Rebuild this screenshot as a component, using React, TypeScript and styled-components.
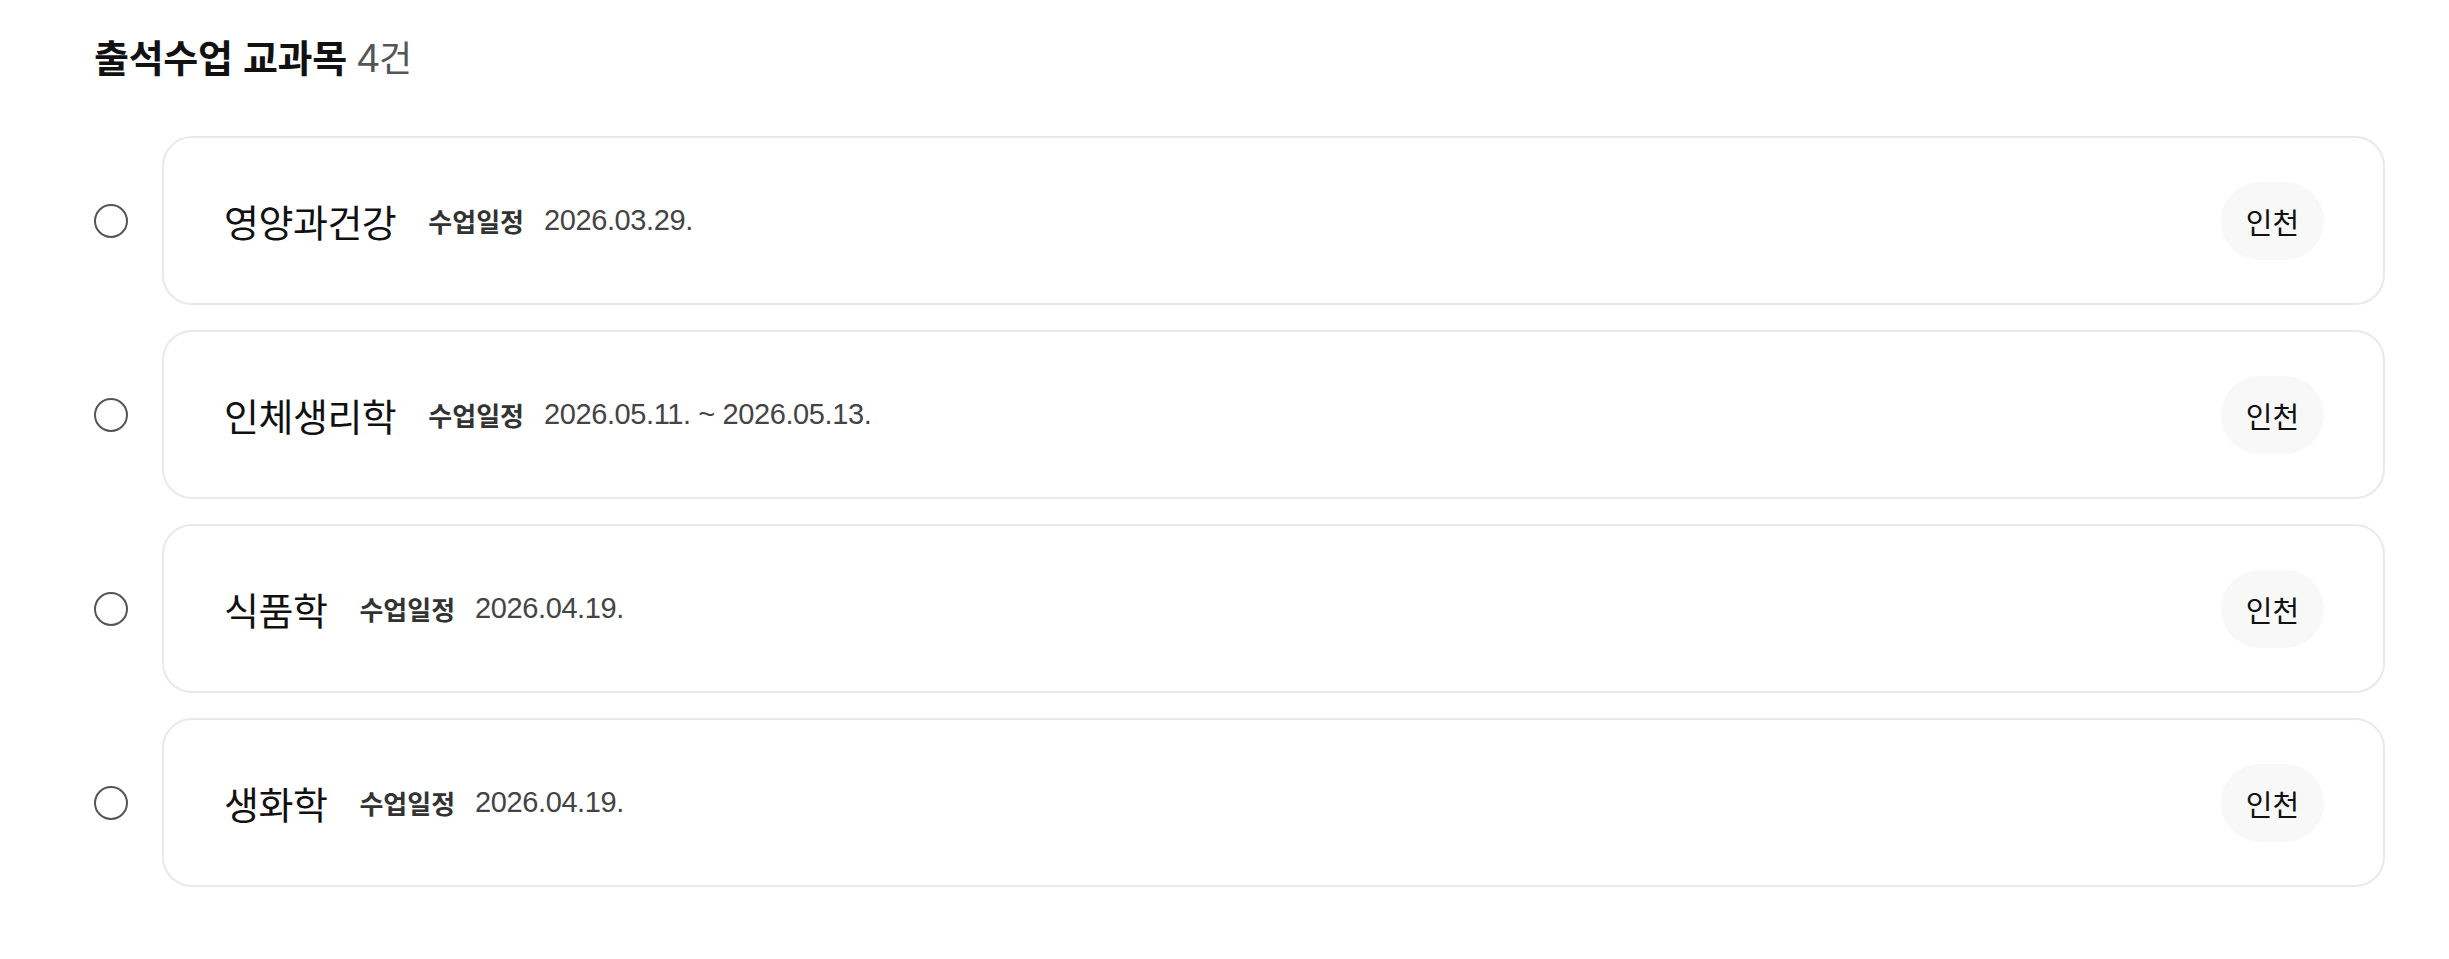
import React from 'react';
import styled, { createGlobalStyle } from 'styled-components';

const GlobalStyle = createGlobalStyle`
  * {
    box-sizing: border-box;
  }
  body {
    margin: 0;
    background: #ffffff;
    font-family: "Liberation Sans", "Noto Sans CJK KR", sans-serif;
    color: #111111;
  }
`;

type Course = {
    id: number;
    name: string;
    schedule: string;
    region: string;
};

const courses: Course[] = [
    { id: 1, name: '영양과건강', schedule: '2026.03.29.', region: '인천' },
    { id: 2, name: '인체생리학', schedule: '2026.05.11. ~ 2026.05.13.', region: '인천' },
    { id: 3, name: '식품학', schedule: '2026.04.19.', region: '인천' },
    { id: 4, name: '생화학', schedule: '2026.04.19.', region: '인천' },
];

export default function App() {
    return (
        <>
            <GlobalStyle />
            <Section>
                <Title>
                    출석수업 교과목 <Count>4<CountUnit>건</CountUnit></Count>
                </Title>
                <List>
                    {courses.map((course) => (
                        <Row key={course.id}>
                            <Radio type="radio" name="course" aria-label={course.name} />
                            <Card>
                                <Info>
                                    <Name>{course.name}</Name>
                                    <Label>수업일정</Label>
                                    <DateText>{course.schedule}</DateText>
                                </Info>
                                <RegionChip>{course.region}</RegionChip>
                            </Card>
                        </Row>
                    ))}
                </List>
            </Section>
        </>
    );
}

const Section = styled.section`
  padding: 34px 64px 40px 94px;
`;

const Title = styled.h2`
  margin: 0 0 52px;
  font-size: 38px;
  line-height: 48px;
  font-weight: 700;
  color: #111111;
  letter-spacing: -0.3px;
`;

const Count = styled.span`
  font-size: 40px;
  font-weight: 400;
  color: #555555;
`;

const CountUnit = styled.span`
  font-size: 36px;
`;

const List = styled.ul`
  list-style: none;
  margin: 0;
  padding: 0;
  display: flex;
  flex-direction: column;
  gap: 25px;
`;

const Row = styled.li`
  display: flex;
  align-items: center;
  gap: 34px;
`;

const Radio = styled.input`
  appearance: none;
  flex: none;
  width: 34px;
  height: 34px;
  margin: 0;
  border: 2px solid #555555;
  border-radius: 50%;
  background: #ffffff;
  cursor: pointer;
`;

const Card = styled.div`
  flex: 1;
  height: 169px;
  display: flex;
  align-items: center;
  justify-content: space-between;
  padding: 0 59px 0 60px;
  border: 2px solid #e8e8ee;
  border-radius: 30px;
  background: #ffffff;
`;

const Info = styled.div`
  display: flex;
  align-items: center;
`;

const Name = styled.span`
  font-size: 38px;
  font-weight: 400;
  color: #111111;
  margin-right: 32px;
  letter-spacing: -0.5px;
`;

const Label = styled.span`
  font-size: 26px;
  font-weight: 700;
  color: #333333;
  margin-right: 20px;
`;

const DateText = styled.span`
  font-size: 29px;
  color: #444444;
  letter-spacing: -0.4px;
`;

const RegionChip = styled.span`
  display: inline-flex;
  align-items: center;
  justify-content: center;
  width: 103px;
  height: 78px;
  border-radius: 39px;
  background: #f8f8f8;
  font-size: 29px;
  color: #111111;
`;
